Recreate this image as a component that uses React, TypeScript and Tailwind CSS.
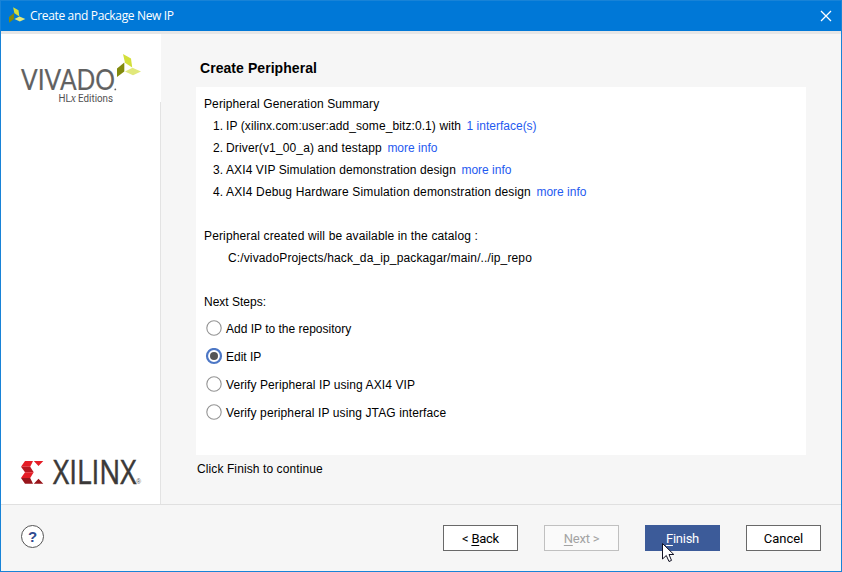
import type { ReactNode } from "react";

function Leaf() {
  return (
    <>
      <path d="M6 0 L14 4.5 L15.2 13.6 L8 8.8 Z" fill="#d3df3b" />
      <path d="M0 14.5 L7.3 8.5 V17.5 L0 23 Z" fill="#818a0d" />
      <path d="M8 17.5 L15.5 13.7 L24 17.5 L16 21.2 Z" fill="#e1e87b" />
    </>
  );
}

function VivadoLogo() {
  return (
    <svg width="130" height="56" viewBox="0 0 130 56" className="block">
      <g fill="#616161">
        <text x="5" y="40" fontFamily="Lato, sans-serif" fontSize="29.5" stroke="#616161" strokeWidth="0.2" textLength="94" lengthAdjust="spacingAndGlyphs">VIVADO</text>
        <circle cx="99.3" cy="39.4" r="0.9" />
      </g>
      <text x="42.5" y="52" fontSize="10" fontFamily="Roboto, sans-serif" fill="#505050" textLength="54.5" lengthAdjust="spacingAndGlyphs">
        HL<tspan fontFamily="'Liberation Serif', serif" fontStyle="italic" fontSize="11.5">x</tspan> Editions
      </text>
      <g transform="translate(101 4)"><Leaf /></g>
    </svg>
  );
}

function XilinxLogo() {
  return (
    <svg width="130" height="44" viewBox="0 -6 130 44" className="block overflow-visible">
      <path d="M9 5 H17 L14.2 10.7 H5 Z M17.8 5 H27.3 L22.5 10 Z" fill="#e51d26" />
      <path d="M5 10.7 H14.2 L17.7 16.3 H9 Z" fill="#b81820" />
      <path d="M9 16.3 H17.7 L14.2 22 H5 Z" fill="#e51d26" />
      <path d="M5 22 H14.2 L17 27.7 H9 Z M22.5 22.7 L27.3 27.7 H17.8 Z" fill="#98151b" />
      <text x="37" y="28" fontSize="32" fontFamily="'Open Sans', sans-serif" fill="#3b3938" stroke="#3b3938" strokeWidth="0.5" textLength="83.5" lengthAdjust="spacingAndGlyphs">XILINX</text>
      <text x="120.3" y="28" fontSize="6.5" fontFamily="'Liberation Sans', sans-serif" fill="#555">®</text>
    </svg>
  );
}

function Item({ n, children, link }: { n: number; children: ReactNode; link: string }) {
  return (
    <li className="flex h-[22px] items-center pl-[9px]">
      <span className="w-[13px] tracking-normal">{n}.</span>
      <span>{children}</span>
      <a className="ml-[5.5px] tracking-normal text-[#1f5af0]">{link}</a>
    </li>
  );
}

function Radio({ label, checked = false, className = "" }: { label: string; checked?: boolean; className?: string }) {
  return (
    <div className="flex h-7 items-center">
      <svg width="18" height="18" viewBox="0 0 18 18" className="ml-px mr-[3px]">
        <circle cx="9" cy="8" r={checked ? 7 : 7.2} fill="white" stroke={checked ? "#4d77c5" : "#949494"} strokeWidth={checked ? 2.2 : 1.1} />
        {checked && <circle cx="9" cy="8" r="4" fill="#555" />}
      </svg>
      <span className={className}>{label}</span>
    </div>
  );
}

function Button({ children, tone = "border-[#696969] bg-white text-black" }: { children: ReactNode; tone?: string }) {
  return <button className={"h-[26px] w-[75px] border pt-px text-center leading-6 " + tone}>{children}</button>;
}

export default function App() {
  return (
    <div className="relative flex h-[572px] w-[842px] flex-col border border-[#1883d7] bg-[#f6f6f6] font-['Liberation_Sans',Arial,sans-serif] text-[12px] text-black">
      <header className="flex h-[30px] shrink-0 items-center bg-[#0078d7] pl-2 pr-[9px] text-white">
        <svg width="17" height="16" viewBox="0 0 25 23" className="-mt-[3px] mr-1"><Leaf /></svg>
        <span className="font-['Open_Sans',sans-serif] text-[12px] tracking-[-0.34px]">Create and Package New IP</span>
        <svg width="12" height="12" viewBox="0 0 12 12" className="ml-auto" stroke="white" strokeWidth="1.3"><path d="M1 1 11 11M11 1 1 11" /></svg>
      </header>
      <div className="h-[3px] shrink-0 bg-[#e6e6e6]" />
      <main className="flex h-[470px] shrink-0">
        <aside className="flex w-[160px] flex-col bg-white">
          <div className="h-[68px] pl-[15px] pt-[16px]"><VivadoLogo /></div>
          <div className="flex flex-1 flex-col justify-end border-r border-[#e3e3e3] pb-[10px] pl-[15px]"><XilinxLogo /></div>
        </aside>
        <section className="pl-[35px] pt-[25px]">
          <h1 className="ml-1 h-7 text-[14px] font-bold leading-[18px] tracking-[0.06px]">Create Peripheral</h1>
          <div className="h-[368px] w-[610px] bg-white pl-2 pt-[6px] leading-[22px] tracking-[0.11px]">
            <p>Peripheral Generation Summary</p>
            <ol>
              <Item n={1} link="1 interface(s)"><span className="tracking-[0.09px]">IP (xilinx.com:user:add_some_bitz:0.1) with</span></Item>
              <Item n={2} link="more info"><span className="tracking-[0.14px]">Driver(v1_00_a) and testapp</span></Item>
              <Item n={3} link="more info"><span className="tracking-[0.1px]">AXI4 VIP Simulation demonstration design</span></Item>
              <Item n={4} link="more info"><span className="tracking-[0.145px]">AXI4 Debug Hardware Simulation demonstration design</span></Item>
            </ol>
            <p className="mt-[22px] tracking-[0.135px]">Peripheral created will be available in the catalog :</p>
            <p className="pl-6 tracking-[0.135px]">C:/vivadoProjects/hack_da_ip_packagar/main/../ip_repo</p>
            <p className="mt-[22px] tracking-normal">Next Steps:</p>
            <div className="mt-[2px]">
              <Radio label="Add IP to the repository" className="tracking-normal" />
              <Radio label="Edit IP" checked className="tracking-normal" />
              <Radio label="Verify Peripheral IP using AXI4 VIP" className="tracking-[0.09px]" />
              <Radio label="Verify peripheral IP using JTAG interface" />
            </div>
          </div>
          <p className="ml-px mt-[5px] leading-[18px] tracking-[0.1px]">Click Finish to continue</p>
        </section>
      </main>
      <footer className="flex flex-1 border-t border-[#e0e0e0] pl-5 pr-5 pt-5">
        <div className="flex h-[23px] w-[23px] items-center justify-center rounded-full border border-[#555] bg-white pt-px text-[15px] font-bold text-[#2f4b8f]">?</div>
        <div className="ml-auto flex gap-[26px] font-[Roboto,sans-serif] text-[13px] tracking-[-0.25px]">
          <Button>&lt; <u className="underline-offset-2">B</u>ack</Button>
          <Button tone="border-[#c0c0c0] bg-[#fafafa] text-[#a3a3a3]"><u className="underline-offset-2">N</u>ext &gt;</Button>
          <Button tone="border-[#3c5b99] bg-[#3c5b99] text-white"><u className="underline-offset-2">F</u>inish</Button>
          <Button><span className="tracking-normal">Cancel</span></Button>
        </div>
      </footer>
      <svg width="14" height="20" viewBox="0 0 14 20" className="absolute left-[661px] top-[542px]">
        <path d="M.5 .5 V16 L4.3 12.5 L7 18.5 L9.5 17.4 L7 11.5 H11.8 Z" fill="white" stroke="#111122" />
      </svg>
    </div>
  );
}
